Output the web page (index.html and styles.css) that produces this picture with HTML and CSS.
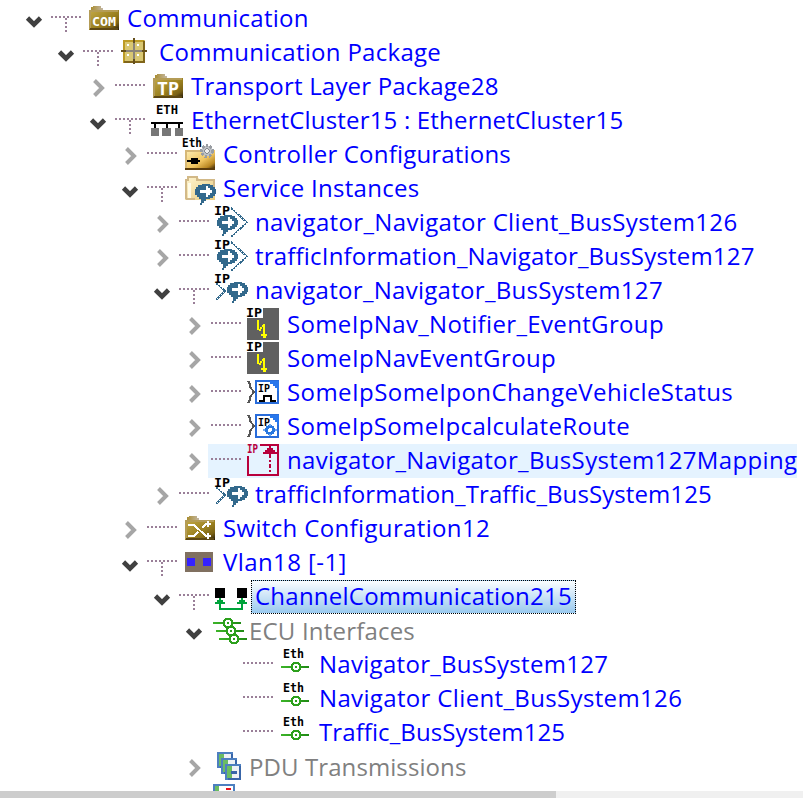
FILE: index.html
```
<!DOCTYPE html>
<html lang="en">
<head>
<meta charset="utf-8">
<title>Communication</title>
<link rel="stylesheet" href="styles.css">
</head>
<body>
<svg class="defs" aria-hidden="true">
  <defs>
    <linearGradient id="gold" x1="0" y1="0" x2="1" y2="1"><stop offset="0" stop-color="#c4aa48"/><stop offset=".55" stop-color="#9a801f"/><stop offset=".8" stop-color="#7b6216"/><stop offset="1" stop-color="#21180a"/></linearGradient>
    <linearGradient id="tab" x1="0" y1="0" x2="1" y2="0"><stop offset="0" stop-color="#a98d32"/><stop offset="1" stop-color="#c4b8a5"/></linearGradient>
    <linearGradient id="amber" x1="0" y1="0" x2="1" y2="1"><stop offset="0" stop-color="#fff0b8"/><stop offset=".55" stop-color="#f0c560"/><stop offset=".8" stop-color="#b98722"/><stop offset="1" stop-color="#1c1003"/></linearGradient>
    <linearGradient id="cream" x1="0" y1="0" x2="1" y2="1"><stop offset="0" stop-color="#fff6d2"/><stop offset="1" stop-color="#e8cb7e"/></linearGradient>
    <linearGradient id="wire" gradientUnits="userSpaceOnUse" x1="3" y1="0" x2="31" y2="0"><stop offset="0" stop-color="#3cb428"/><stop offset="1" stop-color="#1f8a14"/></linearGradient>
  </defs>
  <symbol id="open" viewBox="0 0 20 34"><path d="M3.500 16l6.500 6.500 6.500-6.500" fill="none" stroke="#404040" stroke-width="4.600"/></symbol>
  <symbol id="closed" viewBox="0 0 20 34"><path d="M6.500 10.500l7.500 7.500-7.500 7.500" fill="none" stroke="#a6a6a6" stroke-width="4"/></symbol>
  <symbol id="folder" viewBox="0 0 36 34"><path d="M5 8V5h2V4h8v2h2v2z" fill="url(#tab)"/><path d="M3 8h30v20H3z" fill="url(#gold)"/><path d="M3 9h29M4 8v19" fill="none" stroke="#b49c56" stroke-width="2"/><path d="M4 27h28" stroke="#5d4815" stroke-width="2"/></symbol>
  <symbol id="package" viewBox="0 0 36 34"><path d="M5 4h22v22H5z" fill="#d9c772"/><path d="M6 27V5h20" fill="none" stroke="#bd9b25" stroke-width="2"/><path d="M6 26h20V5" fill="none" stroke="#80651a" stroke-width="2"/><path d="M16 7v18M7 15h18" stroke="#8c8479" stroke-width="2"/><path d="M16 2v5m0 16v5M3 15h5m16 0h5" stroke="#66501c" stroke-width="2"/><path d="M9 8h2v2H9zm10 0h2v2h-2zM9 18h2v2H9zm10 0h2v2h-2z" fill="#fff"/></symbol>
  <symbol id="cluster" viewBox="0 0 36 34"><path d="M1 18h32v2H1zM4 20h2v4H4zm12 0h2v4h-2zm12 0h2v4h-2z" fill="#000"/><path d="M1 24h8v8H1zm11 0h9v8h-9zm13 0h8v8h-8z" fill="#777"/></symbol>
  <symbol id="controller" viewBox="0 0 36 34"><path d="M3 12h30v20H3z" fill="url(#amber)"/><path d="M4 31V13h17" fill="none" stroke="#d6b878" stroke-width="2"/><path d="M3 31h30" stroke="#5b3c0c" stroke-width="2"/><path d="M5 22h13v2H5zM9 20h7v6H9z" fill="#000"/><circle cx="25" cy="13" r="5.500" fill="#bfc3c7" stroke="#999da2" stroke-width="3" stroke-dasharray="2.500 1.500"/><circle cx="25" cy="13" r="2.300" fill="#eee" stroke="#85898e"/></symbol>
  <symbol id="bubble" viewBox="0 0 24 26"><path d="M7 0h8v1h3v2h2v2h1v5h-1v2h-2v2h-3v1h-4v2H9v2H7v2H5v-2h1v-4H4v-2H2v-2H0V5h1V3h2V1h4z" fill="#33698c"/><path d="M5 6h6V2h2v2h2v2h2v3h-2v2h-2v2h-2V9H5z" fill="#fff"/></symbol>
  <symbol id="services" viewBox="0 0 36 34"><path d="M5 8V5h2V4h8v2h2v2h16v20H3V8z" fill="url(#cream)"/><path d="M4 27V8h2V5h9v3h17v10M4 27h9" fill="none" stroke="#d2b988" stroke-width="2"/><path d="M6 26V11h3v15z" fill="#fffbe7"/><use href="#bubble" x="13" y="12" width="24" height="26"/></symbol>
  <symbol id="provided" viewBox="0 0 36 34"><use href="#bubble" x="3" y="9" width="24" height="26"/><path d="M17 2l16 14.500L17 31" fill="none" stroke="#33698c" stroke-width="1.800" stroke-dasharray="2.200 .7"/></symbol>
  <symbol id="consumed" viewBox="0 0 36 34"><use href="#bubble" x="13" y="8" width="24" height="26"/><path d="M2 9l9 8-9 9" fill="none" stroke="#33698c" stroke-width="1.800" stroke-dasharray="2.200 .7"/></symbol>
  <symbol id="event" viewBox="0 0 36 34"><path d="M1 0h32v32H1z" fill="#606060"/><path d="M1 0h16v10H1z" fill="#fff"/><path d="M12 12v10M13 22h2M14 20h2M16 18h2M18 16v13M15 27h6M17 29h3" fill="none" stroke="#ff0" stroke-width="2"/></symbol>
  <symbol id="card" viewBox="0 0 36 34"><path d="M2 5l2 3v3l4 5-4 5v3l-2 3" fill="none" stroke="#555" stroke-width="2"/><path d="M10 5h22v22H10z" fill="#fff" stroke="#286cda" stroke-width="2"/><path d="M24 5h9v10h-2v-3h-2v-2h-2V8h-3z" fill="#2877ec"/></symbol>
  <symbol id="notifier" viewBox="0 0 36 34"><use href="#card"/><path d="M13 25h5v-5h7v5h5" fill="none" stroke="#000" stroke-width="2"/></symbol>
  <symbol id="method" viewBox="0 0 36 34"><use href="#card"/><circle cx="24" cy="20" r="3.500" fill="#fff" stroke="#2878e0" stroke-width="3"/><path d="M23 14h2v2h-2zm0 10h2v2h-2zm-6-5h2v2h-2zm12 0h2v2h-2z" fill="#71a9ee"/></symbol>
  <symbol id="mapping" viewBox="0 0 36 34"><path d="M14 1h18v30H2V12" fill="none" stroke="#b8003c" stroke-width="2"/><path d="M23 2h2v2h2v2h2v2h2v2H17V8h2V6h2V4h2z" fill="#b8003c"/><path d="M24 10v20" stroke="#b8003c" stroke-width="2" stroke-dasharray="4 2 2 2"/></symbol>
  <symbol id="switch" viewBox="0 0 36 34"><use href="#folder"/><path d="M6 13h6l12 11h5M6 24h6l4-4m4-4l4-4h5M26 9v6m0 6v6" fill="none" stroke="#fff" stroke-width="2"/></symbol>
  <symbol id="vlan" viewBox="0 0 36 34"><path d="M3 6h28v20H3z" fill="#807060"/><path d="M5 12h8v8H5zm16 0h8v8h-8z" fill="#3522ff"/></symbol>
  <symbol id="channel" viewBox="0 0 36 34"><path d="M1 8h10v10H1zm22 0h10v10H23z" fill="#000"/><path d="M6 20v9h22v-9" fill="none" stroke="#00a33a" stroke-width="2"/><path d="M5 18h2v2h2v2h2v2H1v-2h2v-2h2zm22 0h2v2h2v2h2v2H23v-2h2v-2h2z" fill="#00a33a"/></symbol>
  <symbol id="port" viewBox="0 0 36 34"><path d="M3 18h28v2H3z" fill="url(#wire)"/><path d="M16 15h4l2 2v4l-2 2h-4l-2-2v-4z" fill="#fff" stroke="#2ca01c" stroke-width="2"/><path d="M17 18h2v2h-2z" fill="#2ca01c"/></symbol>
  <symbol id="ports" viewBox="0 0 36 34"><use href="#port" x="-4" y="-10" width="36" height="34"/><use href="#port" x="-1" y="-2" width="36" height="34"/><use href="#port" x="2" y="6" width="36" height="34"/></symbol>
  <symbol id="page" viewBox="0 0 18 18"><path d="M1 1h14v14H1z" fill="#eef1f5" stroke="#4d7fc0" stroke-width="2"/><path d="M2 2h5v12H2z" fill="#6abc62"/><path d="M15 2v13H3" fill="none" stroke="#3865a8" stroke-width="2"/></symbol>
  <symbol id="pages" viewBox="0 0 36 34"><use href="#page" x="3" y="2" width="18" height="18"/><use href="#page" x="7" y="8" width="18" height="18"/><use href="#page" x="11" y="14" width="18" height="18"/><path d="M17 21h6v3h-6z" fill="#3865a8"/></symbol>
  <symbol id="record" viewBox="0 0 36 34"><path d="M0 1h20v9H0z" fill="#fff" stroke="#4d7fc0" stroke-width="2"/><path d="M1 2h4v6H1z" fill="#6abc62"/><path d="M12 4h5v2h-5z" fill="#e8101c"/></symbol>
</svg>

<main class="tree">
  <div class="row l0"><svg class="toggle"><use href="#open"/></svg><i class="link stem"></i><svg class="icon"><use href="#folder"/><text class="mono light" x="6" y="24" textLength="24" lengthAdjust="spacingAndGlyphs">COM</text></svg><span class="label">Communication</span></div>
  <div class="row l1"><svg class="toggle"><use href="#open"/></svg><i class="link stem"></i><svg class="icon"><use href="#package"/></svg><span class="label">Communication Package</span></div>
  <div class="row l2"><svg class="toggle"><use href="#closed"/></svg><i class="link"></i><svg class="icon"><use href="#folder"/><text class="mono light big" x="7" y="25" textLength="22" lengthAdjust="spacingAndGlyphs">TP</text></svg><span class="label snug">Transport Layer Package28</span></div>
  <div class="row l2"><svg class="toggle"><use href="#open"/></svg><i class="link stem"></i><svg class="icon"><use href="#cluster"/><text class="mono" x="6" y="10" textLength="22" lengthAdjust="spacingAndGlyphs">ETH</text></svg><span class="label snug">EthernetCluster15 : EthernetCluster15</span></div>
  <div class="row l3"><svg class="toggle"><use href="#closed"/></svg><i class="link"></i><svg class="icon"><use href="#controller"/><text class="mono" x="0" y="9" textLength="20" lengthAdjust="spacingAndGlyphs">Eth</text></svg><span class="label snug">Controller Configurations</span></div>
  <div class="row l3"><svg class="toggle"><use href="#open"/></svg><i class="link stem"></i><svg class="icon"><use href="#services"/></svg><span class="label">Service Instances</span></div>
  <div class="row l4"><svg class="toggle"><use href="#closed"/></svg><i class="link"></i><svg class="icon"><use href="#provided"/><text class="mono" x="0" y="9" textLength="16" lengthAdjust="spacingAndGlyphs">IP</text></svg><span class="label wide">navigator_Navigator Client_BusSystem126</span></div>
  <div class="row l4"><svg class="toggle"><use href="#closed"/></svg><i class="link"></i><svg class="icon"><use href="#provided"/><text class="mono" x="0" y="9" textLength="16" lengthAdjust="spacingAndGlyphs">IP</text></svg><span class="label snug">trafficInformation_Navigator_BusSystem127</span></div>
  <div class="row l4"><svg class="toggle"><use href="#open"/></svg><i class="link stem"></i><svg class="icon"><use href="#consumed"/><text class="mono" x="0" y="9" textLength="16" lengthAdjust="spacingAndGlyphs">IP</text></svg><span class="label">navigator_Navigator_BusSystem127</span></div>
  <div class="row l5"><svg class="toggle"><use href="#closed"/></svg><i class="link"></i><svg class="icon"><use href="#event"/><text class="mono" x="0" y="9" textLength="16" lengthAdjust="spacingAndGlyphs">IP</text></svg><span class="label wide">SomeIpNav_Notifier_EventGroup</span></div>
  <div class="row l5"><svg class="toggle"><use href="#closed"/></svg><i class="link"></i><svg class="icon"><use href="#event"/><text class="mono" x="0" y="9" textLength="16" lengthAdjust="spacingAndGlyphs">IP</text></svg><span class="label wider">SomeIpNavEventGroup</span></div>
  <div class="row l5"><svg class="toggle"><use href="#closed"/></svg><i class="link"></i><svg class="icon"><use href="#notifier"/><text class="mono small" x="12" y="16" textLength="12" lengthAdjust="spacingAndGlyphs">IP</text></svg><span class="label wider">SomeIpSomeIponChangeVehicleStatus</span></div>
  <div class="row l5"><svg class="toggle"><use href="#closed"/></svg><i class="link"></i><svg class="icon"><use href="#method"/><text class="mono small" x="12" y="16" textLength="12" lengthAdjust="spacingAndGlyphs">IP</text></svg><span class="label wide">SomeIpSomeIpcalculateRoute</span></div>
  <div class="row l5 hovered"><svg class="toggle"><use href="#closed"/></svg><i class="link"></i><svg class="icon"><use href="#mapping"/><text class="mono crimson" x="1" y="9" textLength="11" lengthAdjust="spacingAndGlyphs">IP</text></svg><span class="label wide">navigator_Navigator_BusSystem127Mapping</span></div>
  <div class="row l4"><svg class="toggle"><use href="#closed"/></svg><i class="link"></i><svg class="icon"><use href="#consumed"/><text class="mono" x="0" y="9" textLength="16" lengthAdjust="spacingAndGlyphs">IP</text></svg><span class="label tight">trafficInformation_Traffic_BusSystem125</span></div>
  <div class="row l3"><svg class="toggle"><use href="#closed"/></svg><i class="link"></i><svg class="icon"><use href="#switch"/></svg><span class="label wide">Switch Configuration12</span></div>
  <div class="row l3"><svg class="toggle"><use href="#open"/></svg><i class="link stem"></i><svg class="icon"><use href="#vlan"/></svg><span class="label wider">Vlan18 [-1]</span></div>
  <div class="row l4"><svg class="toggle"><use href="#open"/></svg><i class="link stem"></i><svg class="icon"><use href="#channel"/></svg><span class="label selected">ChannelCommunication215</span></div>
  <div class="row l5 group"><svg class="toggle"><use href="#open"/></svg><svg class="icon"><use href="#ports"/></svg><span class="label snug">ECU Interfaces</span></div>
  <div class="row l6"><span class="toggle"></span><i class="link"></i><svg class="icon"><use href="#port"/><text class="mono" x="5" y="10" textLength="21" lengthAdjust="spacingAndGlyphs">Eth</text></svg><span class="label">Navigator_BusSystem127</span></div>
  <div class="row l6"><span class="toggle"></span><i class="link"></i><svg class="icon"><use href="#port"/><text class="mono" x="5" y="10" textLength="21" lengthAdjust="spacingAndGlyphs">Eth</text></svg><span class="label wide">Navigator Client_BusSystem126</span></div>
  <div class="row l6"><span class="toggle"></span><i class="link"></i><svg class="icon"><use href="#port"/><text class="mono" x="5" y="10" textLength="21" lengthAdjust="spacingAndGlyphs">Eth</text></svg><span class="label tight">Traffic_BusSystem125</span></div>
  <div class="row l5 group"><svg class="toggle"><use href="#closed"/></svg><svg class="icon"><use href="#pages"/></svg><span class="label tight">PDU Transmissions</span></div>
  <div class="row l5 group"><span class="toggle"></span><svg class="icon"><use href="#record"/></svg></div>
</main>
<div class="scrollbar"><div class="thumb"></div></div>
</body>
</html>
```
FILE: styles.css
```
body {
  margin: 0;
  height: 798px;
  display: flex;
  flex-direction: column;
  overflow: hidden;
  background: #fff;
  font-family: "Open Sans", "Noto Sans", sans-serif;
  font-size: 24px;
  color: #00f;
}
.defs { position: absolute; width: 0; height: 0; }
.tree { height: 789px; padding-top: 2px; overflow: hidden; }
.row { display: flex; height: 34px; width: max-content; }
.l0 { padding-left: 24px; }
.l1 { padding-left: 56px; }
.l2 { padding-left: 88px; }
.l3 { padding-left: 120px; }
.l4 { padding-left: 152px; }
.l5 { padding-left: 184px; }
.l6 { padding-left: 216px; }
.toggle { flex: none; width: 20px; height: 34px; }
.link {
  flex: none;
  width: 30px;
  height: 16px;
  margin: 14px 5px 0 7px;
  background: repeating-linear-gradient(90deg, #9a7f98 0 2px, transparent 2px 4px) 0 0 / 30px 2px no-repeat;
}
.link.stem {
  background:
    repeating-linear-gradient(90deg, #9a7f98 0 2px, transparent 2px 4px) 0 0 / 30px 2px no-repeat,
    repeating-linear-gradient(#9a7f98 0 2px, transparent 2px 4px) 14px 2px / 2px 14px no-repeat;
}
.icon { flex: none; width: 36px; height: 34px; overflow: visible; shape-rendering: crispEdges; }
.icon symbol, symbol { overflow: visible; }
.label { margin-left: 5px; line-height: 31px; white-space: pre; letter-spacing: .29px; }
.tight { letter-spacing: .09px; }
.snug { letter-spacing: .19px; }
.wide { letter-spacing: .35px; }
.wider { letter-spacing: .42px; }
.hovered { background: linear-gradient(#e5f3ff, #e5f3ff) 208px 0 no-repeat; }
.selected {
  box-sizing: border-box;
  height: 34px;
  margin-left: 1px;
  padding: 0 3px;
  line-height: 29px;
  letter-spacing: .24px;
  border: 1px dotted #000;
  background: linear-gradient(#fafdff, #99c9ef);
}
.group { color: #808080; }
.group .icon { margin-left: 10px; }
.group .label { margin-left: -1px; line-height: 33px; }
.mono { font: bold 13px "DejaVu Sans Mono", monospace; fill: #000; }
.mono.light { fill: #fff; }
.mono.big { font-size: 17px; }
.mono.small { font-size: 11px; }
.mono.crimson { fill: #b8003c; }
.scrollbar { height: 7px; background: #f0f0f0; }
.thumb { width: 556px; height: 7px; background: #cdcdcd; }
```
